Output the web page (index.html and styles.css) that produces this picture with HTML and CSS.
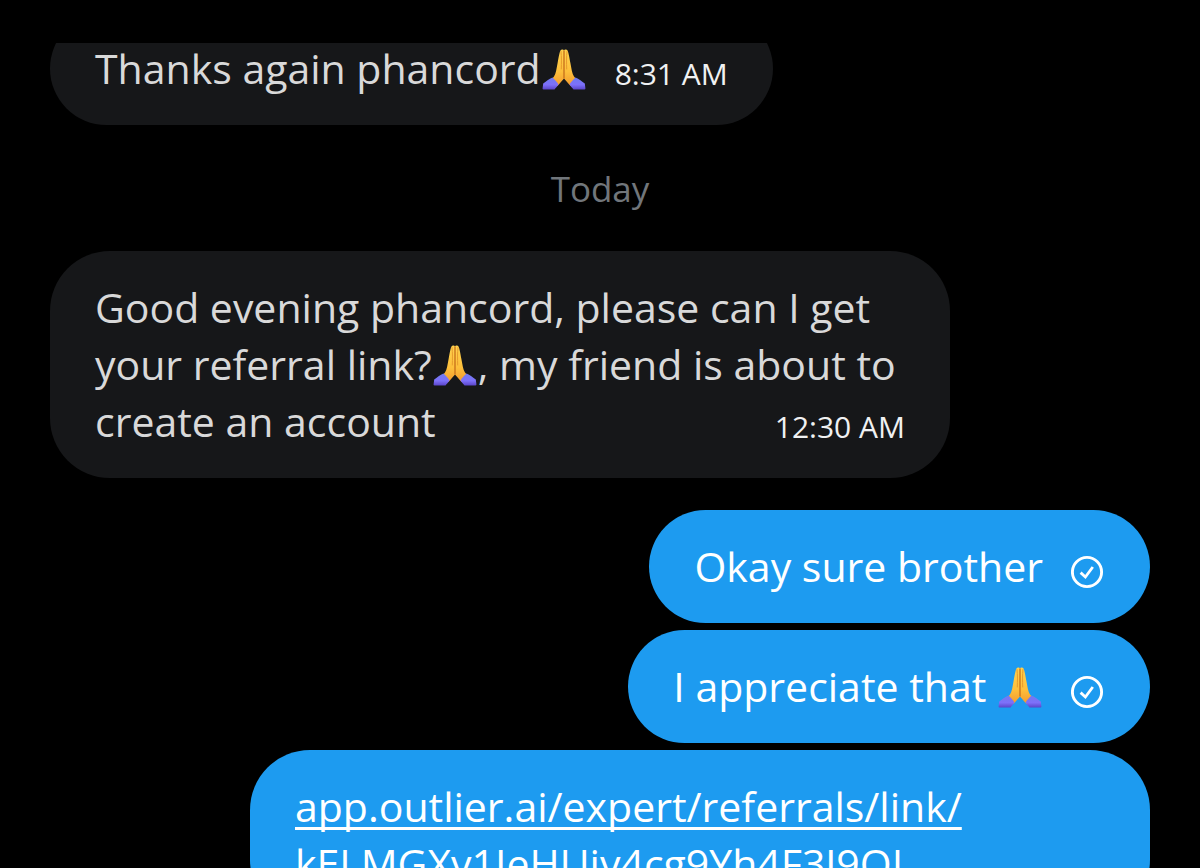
FILE: index.html
```
<!DOCTYPE html>
<html lang="en">
<head>
<meta charset="utf-8">
<meta name="viewport" content="width=device-width, initial-scale=1">
<title>Messages</title>
<link rel="stylesheet" href="styles.css">
</head>
<body>
<svg class="defs" aria-hidden="true">
  <defs>
    <linearGradient id="skin" x1="0" y1="0" x2="0" y2="1">
      <stop offset="0" stop-color="#ffd34f"/>
      <stop offset="0.6" stop-color="#fdbf3b"/>
      <stop offset="1" stop-color="#f29a2e"/>
    </linearGradient>
    <linearGradient id="cuff" x1="0" y1="0" x2="0" y2="1">
      <stop offset="0" stop-color="#6f7cf0"/>
      <stop offset="0.6" stop-color="#7d70fa"/>
      <stop offset="1" stop-color="#5a45c9"/>
    </linearGradient>
    <symbol id="pray" viewBox="0 0 46 42">
      <path fill="url(#skin)" d="M20 1C21.500 0 22.600 .6 23 1.500C23.400 .6 24.500 0 26 1C27.500 2 28.200 8 29.400 14C30.600 20 31 24.500 33 27.500L36 31L29.500 37L23 29.500L16.500 37L10 31L13 27.500C15 24.500 15.400 20 16.600 14C17.800 8 18.500 2 20 1Z"/>
      <path fill="none" stroke="#c9741d" stroke-width="1.400" stroke-linecap="round" d="M23 2V29"/>
      <path fill="none" stroke="#e79a2c" stroke-width="1" stroke-linecap="round" d="M20 2.500C20.600 8 20.500 14 20.300 20M26 2.500C25.400 8 25.500 14 25.700 20"/>
      <path fill="url(#cuff)" d="M11.500 28.500C13.500 30 16 33 17.500 35.500C16 37.500 14.800 39 13.500 40.500H2.500C1.500 40.500 1.500 39.500 1.700 38.500L2.200 34.500C5 32.500 8 30 11.500 28.500Z"/>
      <path fill="url(#cuff)" d="M34.500 28.500C32.500 30 30 33 28.500 35.500C30 37.500 31.200 39 32.500 40.500H43.500C44.500 40.500 44.500 39.500 44.300 38.500L43.800 34.500C41 32.500 38 30 34.500 28.500Z"/>
    </symbol>
    <symbol id="sent" viewBox="0 0 34 34">
      <circle cx="16" cy="17" r="14.600" fill="none" stroke="currentColor" stroke-width="2.900"/>
      <path fill="none" stroke="currentColor" stroke-width="2.800" d="M9.600 17.600L14.400 22L21.800 12"/>
    </symbol>
  </defs>
</svg>
<main class="chat">
  <p class="bubble received">Thanks again phancord<svg class="emoji" role="img" aria-label="Folded hands"><use href="#pray"/></svg><time class="time">8:31 AM</time></p>
  <h2 class="day">Today</h2>
  <p class="bubble received">Good evening phancord, please can I get your referral link?<svg class="emoji" role="img" aria-label="Folded hands"><use href="#pray"/></svg>, my friend is about to create an account<time class="time">12:30 AM</time></p>
  <div class="replies">
    <p class="bubble sent">Okay sure brother<svg class="status" role="img" aria-label="Sent"><use href="#sent"/></svg></p>
    <p class="bubble sent">I appreciate that <svg class="emoji" role="img" aria-label="Folded hands"><use href="#pray"/></svg><svg class="status" role="img" aria-label="Sent"><use href="#sent"/></svg></p>
    <p class="bubble sent"><a class="link" href="#">app.outlier.ai/expert/referrals/link/<wbr>kELMGXv1IeHUiv4cg9Yh4F3J9OL</a></p>
  </div>
</main>
</body>
</html>
```
FILE: styles.css
```
* {
  box-sizing: border-box;
}

body {
  margin: 0;
  height: 100vh;
  padding-top: 43px;
  overflow: hidden;
  background: #000;
  font-family: "Open Sans", "Noto Sans", sans-serif;
}

.defs {
  position: absolute;
  width: 0;
  height: 0;
}

.chat {
  display: flex;
  flex-direction: column;
  align-items: flex-start;
  height: 100%;
  padding: 0 50px;
  overflow: hidden;
}

.chat > * {
  flex-shrink: 0;
}

/* The thread is scrolled part of the way past its first message. */
.chat > .bubble:first-child {
  margin-top: -31px;
}

.bubble {
  max-width: 900px;
  margin: 0;
  padding: 28px 45px;
  border-radius: 60px;
  font-size: 41px;
  line-height: 57px;
}

.received {
  background: #161719;
  color: #d9d9d9;
}

.sent {
  background: #1d9bf0;
  color: #fff;
}

.day {
  align-self: center;
  margin: 36px 0 34px;
  color: #71767b;
  font-size: 35px;
  font-weight: 400;
  line-height: 56px;
}

.replies {
  display: flex;
  flex-direction: column;
  align-items: flex-end;
  align-self: stretch;
  gap: 7px;
  margin-top: 32px;
}

.time {
  float: right;
  margin: 14px 0 0 28px;
  color: #f0f1f2;
  font-size: 30px;
  line-height: 40px;
}

.emoji {
  width: 46px;
  height: 42px;
  vertical-align: -7px;
}

.status {
  float: right;
  width: 34px;
  height: 34px;
  margin: 17px 0 0 28px;
}

.link {
  color: inherit;
  text-decoration: underline;
  text-decoration-thickness: 3px;
  text-decoration-skip-ink: none;
  text-underline-offset: 5px;
}
```
